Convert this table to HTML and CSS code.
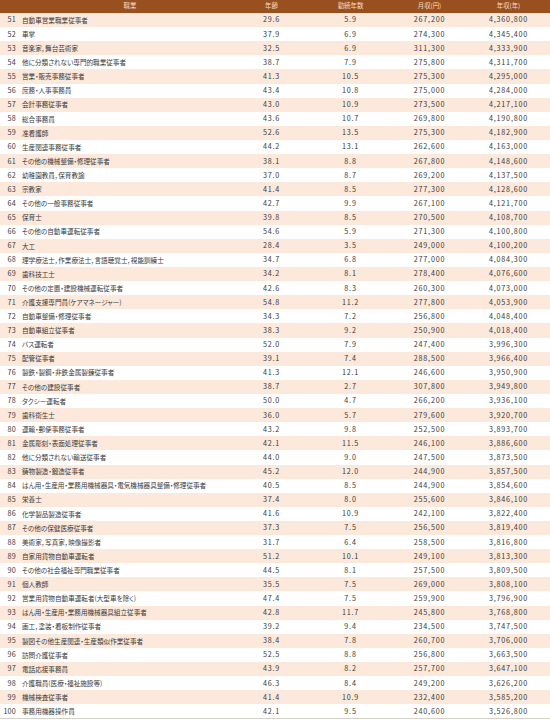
FILE: index.html
```html
<!DOCTYPE html>
<html lang="ja">
<head>
<meta charset="utf-8">
<title>職業別年収</title>
<link rel="stylesheet" href="styles.css">
</head>
<body>
<div class="tbl">
  <div class="row head">
    <div class="c num"></div>
    <div class="c job jh">職業</div>
    <div class="c v">年齢</div>
    <div class="c v">勤続年数</div>
    <div class="c v">月収(円)</div>
    <div class="c v">年収(年)</div>
  </div>
  <div class="row odd"><div class="c num">51</div><div class="c job">自動車営業職業従事者</div><div class="c v n">29.6</div><div class="c v n">5.9</div><div class="c v n">267,200</div><div class="c v n">4,360,800</div></div>
  <div class="row"><div class="c num">52</div><div class="c job">車掌</div><div class="c v n">37.9</div><div class="c v n">6.9</div><div class="c v n">274,300</div><div class="c v n">4,345,400</div></div>
  <div class="row odd"><div class="c num">53</div><div class="c job">音楽家，舞台芸術家</div><div class="c v n">32.5</div><div class="c v n">6.9</div><div class="c v n">311,300</div><div class="c v n">4,333,900</div></div>
  <div class="row"><div class="c num">54</div><div class="c job">他に分類されない専門的職業従事者</div><div class="c v n">38.7</div><div class="c v n">7.9</div><div class="c v n">275,800</div><div class="c v n">4,311,700</div></div>
  <div class="row odd"><div class="c num">55</div><div class="c job">営業・販売事務従事者</div><div class="c v n">41.3</div><div class="c v n">10.5</div><div class="c v n">275,300</div><div class="c v n">4,295,000</div></div>
  <div class="row"><div class="c num">56</div><div class="c job">庶務・人事事務員</div><div class="c v n">43.4</div><div class="c v n">10.8</div><div class="c v n">275,000</div><div class="c v n">4,284,000</div></div>
  <div class="row odd"><div class="c num">57</div><div class="c job">会計事務従事者</div><div class="c v n">43.0</div><div class="c v n">10.9</div><div class="c v n">273,500</div><div class="c v n">4,217,100</div></div>
  <div class="row"><div class="c num">58</div><div class="c job">総合事務員</div><div class="c v n">43.6</div><div class="c v n">10.7</div><div class="c v n">269,800</div><div class="c v n">4,190,800</div></div>
  <div class="row odd"><div class="c num">59</div><div class="c job">准看護師</div><div class="c v n">52.6</div><div class="c v n">13.5</div><div class="c v n">275,300</div><div class="c v n">4,182,900</div></div>
  <div class="row"><div class="c num">60</div><div class="c job">生産関連事務従事者</div><div class="c v n">44.2</div><div class="c v n">13.1</div><div class="c v n">262,600</div><div class="c v n">4,163,000</div></div>
  <div class="row odd"><div class="c num">61</div><div class="c job">その他の機械整備・修理従事者</div><div class="c v n">38.1</div><div class="c v n">8.8</div><div class="c v n">267,800</div><div class="c v n">4,148,600</div></div>
  <div class="row"><div class="c num">62</div><div class="c job">幼稚園教員，保育教諭</div><div class="c v n">37.0</div><div class="c v n">8.7</div><div class="c v n">269,200</div><div class="c v n">4,137,500</div></div>
  <div class="row odd"><div class="c num">63</div><div class="c job">宗教家</div><div class="c v n">41.4</div><div class="c v n">8.5</div><div class="c v n">277,300</div><div class="c v n">4,128,600</div></div>
  <div class="row"><div class="c num">64</div><div class="c job">その他の一般事務従事者</div><div class="c v n">42.7</div><div class="c v n">9.9</div><div class="c v n">267,100</div><div class="c v n">4,121,700</div></div>
  <div class="row odd"><div class="c num">65</div><div class="c job">保育士</div><div class="c v n">39.8</div><div class="c v n">8.5</div><div class="c v n">270,500</div><div class="c v n">4,108,700</div></div>
  <div class="row"><div class="c num">66</div><div class="c job">その他の自動車運転従事者</div><div class="c v n">54.6</div><div class="c v n">5.9</div><div class="c v n">271,300</div><div class="c v n">4,100,800</div></div>
  <div class="row odd"><div class="c num">67</div><div class="c job">大工</div><div class="c v n">28.4</div><div class="c v n">3.5</div><div class="c v n">249,000</div><div class="c v n">4,100,200</div></div>
  <div class="row"><div class="c num">68</div><div class="c job">理学療法士，作業療法士，言語聴覚士，視能訓練士</div><div class="c v n">34.7</div><div class="c v n">6.8</div><div class="c v n">277,000</div><div class="c v n">4,084,300</div></div>
  <div class="row odd"><div class="c num">69</div><div class="c job">歯科技工士</div><div class="c v n">34.2</div><div class="c v n">8.1</div><div class="c v n">278,400</div><div class="c v n">4,076,600</div></div>
  <div class="row"><div class="c num">70</div><div class="c job">その他の定置・建設機械運転従事者</div><div class="c v n">42.6</div><div class="c v n">8.3</div><div class="c v n">260,300</div><div class="c v n">4,073,000</div></div>
  <div class="row odd"><div class="c num">71</div><div class="c job">介護支援専門員(ケアマネージャー)</div><div class="c v n">54.8</div><div class="c v n">11.2</div><div class="c v n">277,800</div><div class="c v n">4,053,900</div></div>
  <div class="row"><div class="c num">72</div><div class="c job">自動車整備・修理従事者</div><div class="c v n">34.3</div><div class="c v n">7.2</div><div class="c v n">256,800</div><div class="c v n">4,048,400</div></div>
  <div class="row odd"><div class="c num">73</div><div class="c job">自動車組立従事者</div><div class="c v n">38.3</div><div class="c v n">9.2</div><div class="c v n">250,900</div><div class="c v n">4,018,400</div></div>
  <div class="row"><div class="c num">74</div><div class="c job">バス運転者</div><div class="c v n">52.0</div><div class="c v n">7.9</div><div class="c v n">247,400</div><div class="c v n">3,996,300</div></div>
  <div class="row odd"><div class="c num">75</div><div class="c job">配管従事者</div><div class="c v n">39.1</div><div class="c v n">7.4</div><div class="c v n">288,500</div><div class="c v n">3,966,400</div></div>
  <div class="row"><div class="c num">76</div><div class="c job">製鉄・製鋼・非鉄金属製錬従事者</div><div class="c v n">41.3</div><div class="c v n">12.1</div><div class="c v n">246,600</div><div class="c v n">3,950,900</div></div>
  <div class="row odd"><div class="c num">77</div><div class="c job">その他の建設従事者</div><div class="c v n">38.7</div><div class="c v n">2.7</div><div class="c v n">307,800</div><div class="c v n">3,949,800</div></div>
  <div class="row"><div class="c num">78</div><div class="c job">タクシー運転者</div><div class="c v n">50.0</div><div class="c v n">4.7</div><div class="c v n">266,200</div><div class="c v n">3,936,100</div></div>
  <div class="row odd"><div class="c num">79</div><div class="c job">歯科衛生士</div><div class="c v n">36.0</div><div class="c v n">5.7</div><div class="c v n">279,600</div><div class="c v n">3,920,700</div></div>
  <div class="row"><div class="c num">80</div><div class="c job">運輸・郵便事務従事者</div><div class="c v n">43.2</div><div class="c v n">9.8</div><div class="c v n">252,500</div><div class="c v n">3,893,700</div></div>
  <div class="row odd"><div class="c num">81</div><div class="c job">金属彫刻・表面処理従事者</div><div class="c v n">42.1</div><div class="c v n">11.5</div><div class="c v n">246,100</div><div class="c v n">3,886,600</div></div>
  <div class="row"><div class="c num">82</div><div class="c job">他に分類されない輸送従事者</div><div class="c v n">44.0</div><div class="c v n">9.0</div><div class="c v n">247,500</div><div class="c v n">3,873,500</div></div>
  <div class="row odd"><div class="c num">83</div><div class="c job">鋳物製造・鍛造従事者</div><div class="c v n">45.2</div><div class="c v n">12.0</div><div class="c v n">244,900</div><div class="c v n">3,857,500</div></div>
  <div class="row"><div class="c num">84</div><div class="c job">はん用・生産用・業務用機械器具・電気機械器具整備・修理従事者</div><div class="c v n">40.5</div><div class="c v n">8.5</div><div class="c v n">244,900</div><div class="c v n">3,854,600</div></div>
  <div class="row odd"><div class="c num">85</div><div class="c job">栄養士</div><div class="c v n">37.4</div><div class="c v n">8.0</div><div class="c v n">255,600</div><div class="c v n">3,846,100</div></div>
  <div class="row"><div class="c num">86</div><div class="c job">化学製品製造従事者</div><div class="c v n">41.6</div><div class="c v n">10.9</div><div class="c v n">242,100</div><div class="c v n">3,822,400</div></div>
  <div class="row odd"><div class="c num">87</div><div class="c job">その他の保健医療従事者</div><div class="c v n">37.3</div><div class="c v n">7.5</div><div class="c v n">256,500</div><div class="c v n">3,819,400</div></div>
  <div class="row"><div class="c num">88</div><div class="c job">美術家，写真家，映像撮影者</div><div class="c v n">31.7</div><div class="c v n">6.4</div><div class="c v n">258,500</div><div class="c v n">3,816,800</div></div>
  <div class="row odd"><div class="c num">89</div><div class="c job">自家用貨物自動車運転者</div><div class="c v n">51.2</div><div class="c v n">10.1</div><div class="c v n">249,100</div><div class="c v n">3,813,300</div></div>
  <div class="row"><div class="c num">90</div><div class="c job">その他の社会福祉専門職業従事者</div><div class="c v n">44.5</div><div class="c v n">8.1</div><div class="c v n">257,500</div><div class="c v n">3,809,500</div></div>
  <div class="row odd"><div class="c num">91</div><div class="c job">個人教師</div><div class="c v n">35.5</div><div class="c v n">7.5</div><div class="c v n">269,000</div><div class="c v n">3,808,100</div></div>
  <div class="row"><div class="c num">92</div><div class="c job">営業用貨物自動車運転者(大型車を除く)</div><div class="c v n">47.4</div><div class="c v n">7.5</div><div class="c v n">259,900</div><div class="c v n">3,796,900</div></div>
  <div class="row odd"><div class="c num">93</div><div class="c job">はん用・生産用・業務用機械器具組立従事者</div><div class="c v n">42.8</div><div class="c v n">11.7</div><div class="c v n">245,800</div><div class="c v n">3,768,800</div></div>
  <div class="row"><div class="c num">94</div><div class="c job">画工，塗装・看板制作従事者</div><div class="c v n">39.2</div><div class="c v n">9.4</div><div class="c v n">234,500</div><div class="c v n">3,747,500</div></div>
  <div class="row odd"><div class="c num">95</div><div class="c job">製図その他生産関連・生産類似作業従事者</div><div class="c v n">38.4</div><div class="c v n">7.8</div><div class="c v n">260,700</div><div class="c v n">3,706,000</div></div>
  <div class="row"><div class="c num">96</div><div class="c job">訪問介護従事者</div><div class="c v n">52.5</div><div class="c v n">8.8</div><div class="c v n">256,800</div><div class="c v n">3,663,500</div></div>
  <div class="row odd"><div class="c num">97</div><div class="c job">電話応接事務員</div><div class="c v n">43.9</div><div class="c v n">8.2</div><div class="c v n">257,700</div><div class="c v n">3,647,100</div></div>
  <div class="row"><div class="c num">98</div><div class="c job">介護職員(医療・福祉施設等)</div><div class="c v n">46.3</div><div class="c v n">8.4</div><div class="c v n">249,200</div><div class="c v n">3,626,200</div></div>
  <div class="row odd"><div class="c num">99</div><div class="c job">機械検査従事者</div><div class="c v n">41.4</div><div class="c v n">10.9</div><div class="c v n">232,400</div><div class="c v n">3,585,200</div></div>
  <div class="row last"><div class="c num">100</div><div class="c job">事務用機器操作員</div><div class="c v n">42.1</div><div class="c v n">9.5</div><div class="c v n">240,600</div><div class="c v n">3,526,800</div></div>
</div>
</body>
</html>
```
FILE: styles.css
```css
html, body {
  margin: 0;
  padding: 0;
  background: #ffffff;
}
body {
  width: 550px;
  font-family: "Noto Sans CJK JP", "Noto Sans", sans-serif;
  color: #3a3a3a;
  font-size: 6.6px;
  font-feature-settings: "palt";
}
.tbl {
  display: flex;
  flex-direction: column;
  width: 550px;
}
.row {
  display: grid;
  grid-template-columns: 16px 216px 79px 79px 79px 79px;
  align-items: center;
  height: 14.12px;
  background: #ffffff;
}
.row.odd {
  background: #fce9dc;
}
.row.head {
  height: 13px;
  background: #98501f;
  color: #f6dcc6;
  font-size: 6.4px;
}
.row.last {
  border-bottom: 1px solid #d4d2c8;
}
.c {
  white-space: nowrap;
  line-height: 1;
}
.num {
  text-align: right;
  font-size: 7.2px;
  letter-spacing: 0.2px;
}
.job {
  padding-left: 6px;
}
.jh {
  text-align: center;
  padding-left: 12px;
}
.v {
  text-align: center;
}
.n {
  font-size: 7.2px;
  letter-spacing: 0.8px;
}
```
